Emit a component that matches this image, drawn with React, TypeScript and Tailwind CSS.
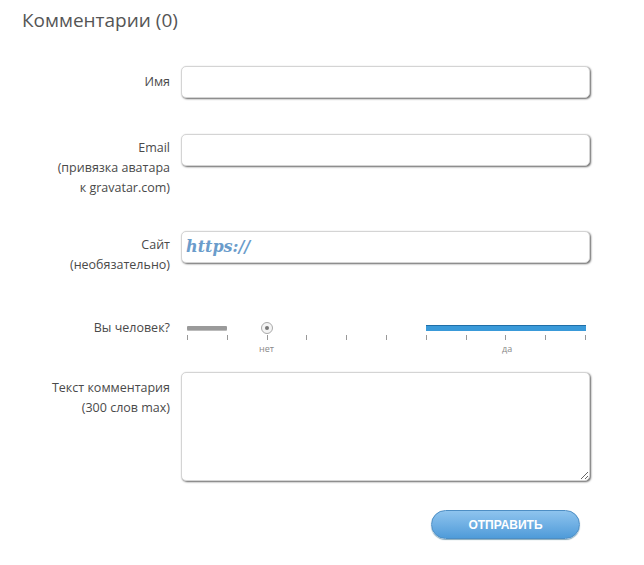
const labelCls = "w-[170px] shrink-0 text-right text-[12.5px] leading-[20px] text-[#4a4a4a]";
const fieldCls =
  "block w-[409px] rounded-[5px] border border-[#d4d4d4] bg-white shadow-[1px_1px_2px_#666] outline-none";

const ticks = [0, 1, 2, 3, 4, 5, 6, 7, 8, 9, 10];

function HumanSlider() {
  return (
    <div className="relative ml-[6px] h-[40px] w-[399px]">
      {/* left grey stub */}
      <div className="absolute left-0 top-[4px] h-[4px] w-[40px] rounded-[1px] bg-[#9a9a9a] shadow-[0_1px_0_#bbb]" />
      {/* right blue bar */}
      <div className="absolute left-[239px] top-[3px] h-[6px] w-[160px] bg-[#3a9ad9] shadow-[inset_0_1px_0_#1f6fa8]" />
      {/* knob */}
      <div className="absolute left-[74px] top-[0px] flex h-[12px] w-[12px] items-center justify-center rounded-full border border-[#aaa] bg-[#f4f4f4]">
        <div className="h-[4px] w-[4px] rounded-full bg-[#777]" />
      </div>
      <div className="absolute left-0 right-0 top-[13px] flex justify-between">
        {ticks.map((t) => (
          <div key={t} className="h-[5px] w-px bg-[#999]" />
        ))}
      </div>
      <div className="absolute left-[72px] top-[20px] text-[9px] text-[#888]">нет</div>
      <div className="absolute left-[315px] top-[20px] text-[9px] text-[#888]">да</div>
    </div>
  );
}

export default function App() {
  return (
    <div className="h-[565px] w-[644px] bg-white font-['Open_Sans',sans-serif]">
      <h2 className="pl-[22px] pt-[7px] text-[19px] leading-[26px] text-[#555]">Комментарии (0)</h2>

      <div className="mt-[33px] flex items-start gap-[11px]">
        <div className={labelCls + " pt-[6px]"}>Имя</div>
        <input className={fieldCls + " h-[32px]"} />
      </div>

      <div className="mt-[36px] flex items-start gap-[11px]">
        <div className={labelCls + " pt-[4px]"}>
          Email
          <br />
          (привязка аватара
          <br />к gravatar.com)
        </div>
        <input className={fieldCls + " h-[32px]"} />
      </div>

      <div className="mt-[33px] flex items-start gap-[11px]">
        <div className={labelCls + " pt-[4px]"}>
          Сайт
          <br />
          (необязательно)
        </div>
        <div className={fieldCls + " flex h-[32px] items-center px-[4px]"}>
          <span className="font-['DejaVu_Serif',serif] text-[16px] font-bold italic text-[#6a9ccb]">https://</span>
        </div>
      </div>

      <div className="mt-[47px] flex items-start gap-[11px]">
        <div className={labelCls + " -mt-[4px]"}>Вы человек?</div>
        <HumanSlider />
      </div>

      <div className="mt-[10px] flex items-start gap-[11px]">
        <div className={labelCls + " pt-[6px]"}>
          Текст комментария
          <br />
          (300 слов max)
        </div>
        <textarea className={fieldCls + " h-[109px] resize-y"} />
      </div>

      <div className="mt-[29px] flex pl-[431px]">
        <button className="h-[29px] w-[149px] rounded-full border border-[#4d8ec4] bg-gradient-to-b from-[#8ec4ee] to-[#4f9bd9] font-['Liberation_Sans',sans-serif] text-[12px] font-bold text-white shadow-[0_1px_1px_#8ab]">
          ОТПРАВИТЬ
        </button>
      </div>
    </div>
  );
}
